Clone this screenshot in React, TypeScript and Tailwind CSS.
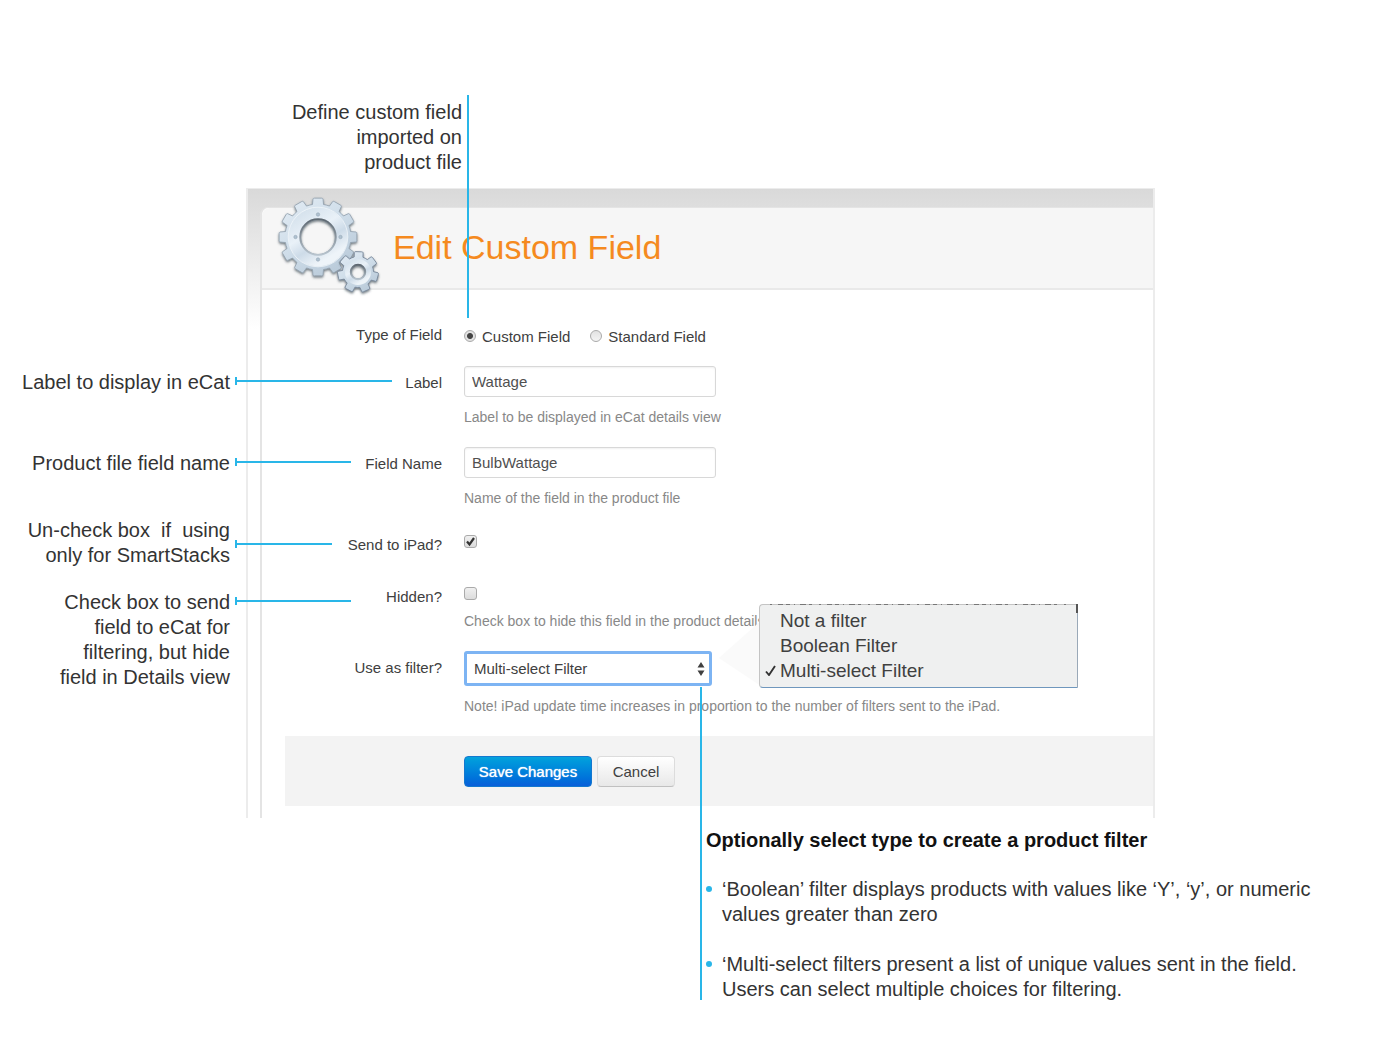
import type { ReactNode } from "react";

const HELP = "text-[14px] leading-5 text-[#888]";
const FIELD =
  "block h-[31px] w-[252px] rounded-[3px] border border-[#d8d8d8] bg-white px-[7px] text-[15px] text-[#505050] shadow-[inset_0_1px_2px_rgba(0,0,0,0.06)] outline-none";

function gearPath(
  cx: number,
  cy: number,
  outer: number,
  root: number,
  hole: number,
  teeth: number,
  offset: number,
) {
  const step = 360 / teeth;
  const at = (r: number, deg: number) => {
    const a = (deg * Math.PI) / 180;
    return `${(cx + r * Math.cos(a)).toFixed(2)} ${(cy + r * Math.sin(a)).toFixed(2)}`;
  };
  let d = "";
  for (let i = 0; i < teeth; i++) {
    const a = offset + i * step;
    d += `${i === 0 ? "M" : "L"}${at(root, a - step * 0.32)}`;
    d += `L${at(outer - 0.6, a - step * 0.25)}`;
    d += `Q${at(outer + 0.3, a - step * 0.22)} ${at(outer, a - step * 0.16)}`;
    d += `L${at(outer, a + step * 0.16)}`;
    d += `Q${at(outer + 0.3, a + step * 0.22)} ${at(outer - 0.6, a + step * 0.25)}`;
    d += `L${at(root, a + step * 0.32)}`;
    d += `A${root} ${root} 0 0 1 ${at(root, a + step * 0.68)}`;
  }
  d += `ZM${cx + hole} ${cy}A${hole} ${hole} 0 1 0 ${cx - hole} ${cy}A${hole} ${hole} 0 1 0 ${cx + hole} ${cy}Z`;
  return d;
}

function Gears() {
  const big = gearPath(43, 41, 39, 33, 17.5, 12, 0);
  const small = gearPath(83, 76, 20.5, 15.5, 7, 7, 15);
  return (
    <svg className="h-[104px] w-[108px] shrink-0" viewBox="0 0 108 104" aria-hidden="true">
      <defs>
        <linearGradient id="steel" x1="0" y1="0" x2="0.7" y2="1">
          <stop offset="0" stopColor="#e4edf5" />
          <stop offset="0.5" stopColor="#d0deea" />
          <stop offset="1" stopColor="#b9cad9" />
        </linearGradient>
        <linearGradient id="face" x1="0" y1="0" x2="0.6" y2="1">
          <stop offset="0" stopColor="#d3e0eb" />
          <stop offset="0.45" stopColor="#e9f1f8" />
          <stop offset="0.7" stopColor="#cddbe8" />
          <stop offset="1" stopColor="#eef4f9" />
        </linearGradient>
        <linearGradient id="rim" x1="0" y1="0" x2="0" y2="1">
          <stop offset="0" stopColor="#5e6871" />
          <stop offset="1" stopColor="#b8c4ce" />
        </linearGradient>
        <filter id="drop" x="-20%" y="-20%" width="140%" height="150%">
          <feDropShadow dx="0" dy="1.5" stdDeviation="1.3" floodColor="#39454f" floodOpacity="0.7" />
        </filter>
      </defs>
      <g filter="url(#drop)">
        <path d={big} fill="url(#steel)" fillRule="evenodd" stroke="#8f9eac" strokeWidth="0.8" />
        <circle cx="43" cy="41" r="24" fill="none" stroke="url(#face)" strokeWidth="11" />
        <circle cx="43" cy="41" r="29.8" fill="none" stroke="#f1f6fa" strokeWidth="0.8" />
        <circle cx="43" cy="41" r="17.8" fill="none" stroke="url(#rim)" strokeWidth="1.8" />
        {[[43, 18.5], [43, 63.5], [20.5, 41], [65.5, 41]].map(([x, y]) => (
          <circle key={`${x}-${y}`} cx={x} cy={y} r="1.7" fill="#b0c2d1" stroke="#93a6b6" strokeWidth="0.6" />
        ))}
      </g>
      <g filter="url(#drop)">
        <path d={small} fill="url(#steel)" fillRule="evenodd" stroke="#77879a" strokeWidth="0.9" />
        <circle cx="83" cy="76" r="10.5" fill="none" stroke="url(#face)" strokeWidth="5" />
        <circle cx="83" cy="76" r="7.2" fill="none" stroke="url(#rim)" strokeWidth="2" />
      </g>
    </svg>
  );
}

function Note({ children, className, line }: { children: ReactNode; className: string; line: string }) {
  return (
    <div className={`relative text-right ${className}`}>
      <p>{children}</p>
      <span className={`absolute left-[235px] flex h-2 items-center border-l-2 border-[#29b6e8] ${line}`}>
        <span className="h-0.5 w-full bg-[#29b6e8]" />
      </span>
    </div>
  );
}

function Row({ label, id, className, children }: { label: string; id: string; className: string; children: ReactNode }) {
  return (
    <div className={`grid grid-cols-[180px_minmax(0,1fr)] gap-[22px] ${className}`}>
      <label htmlFor={id} className="pt-[7px] text-right leading-5">
        {label}
      </label>
      <div>{children}</div>
    </div>
  );
}

const RADIO =
  "size-3 appearance-none rounded-full border border-[#aaa] bg-linear-to-b from-[#e2e2e2] to-[#f4f4f4] checked:bg-[radial-gradient(circle,#444_0_2.5px,#e2e2e2_3.5px)]";
const CHECK =
  "block size-[13px] appearance-none rounded-[3px] border border-[#aaa] bg-linear-to-b from-[#f0f0f0] to-[#dcdcdc]";

export default function App() {
  return (
    <main className="overflow-x-hidden bg-white pt-[100px] pb-12 font-['Liberation_Sans',Arial,sans-serif] text-[20px] leading-[25px] text-[#333]">
      <div className="relative z-10 w-[462px] text-right">
        <p>
          Define custom field
          <br />
          imported on
          <br />
          product file
        </p>
        <span className="absolute -top-[5px] left-[467px] h-[223px] w-0.5 bg-[#29b6e8]" />
      </div>

      <div className="mt-[13px] grid grid-cols-[230px_minmax(0,1fr)] gap-4 pr-[245px]">
        <aside className="relative z-10 pt-[182px]">
          <Note className="" line="top-[7px] w-[157px]">
            Label to display in eCat
          </Note>
          <Note className="mt-14" line="top-[7px] w-[116px]">
            Product file field name
          </Note>
          <Note className="mt-[42px]" line="top-[22px] w-[97px]">
            <span className="whitespace-pre">Un-check box  if  using</span>
            <br />
            only for SmartStacks
          </Note>
          <Note className="mt-[22px]" line="top-[7px] w-[116px]">
            Check box to send
            <br />
            field to eCat for
            <br />
            filtering, but hide
            <br />
            field in Details view
          </Note>
        </aside>

        <section className="border-x-2 border-t border-[#ececec] bg-linear-to-b from-[#d9d9d9] to-white to-[140px] pt-[18px] pl-3">
          <div className="rounded-tl-lg border-t border-l-2 border-[#e4e4e4] bg-white pb-3">
            <header className="flex h-[82px] items-center gap-2.5 rounded-tl-lg border-b-2 border-[#e9e9e9] bg-[#f6f6f6] pl-[13px]">
              <Gears />
              <h1 className="pb-0.5 text-[34px] leading-10 text-[#f58a1f]">Edit Custom Field</h1>
            </header>

            <form className="text-[15px] text-[#404040]" onSubmit={(e) => e.preventDefault()}>
              <Row label="Type of Field" id="type-custom" className="pt-7">
                <div className="flex h-9 items-center gap-5">
                  <label className="flex items-center gap-1.5">
                    <input id="type-custom" type="radio" name="type" defaultChecked className={RADIO} />
                    Custom Field
                  </label>
                  <label className="flex items-center gap-1.5">
                    <input type="radio" name="type" className={RADIO} />
                    Standard Field
                  </label>
                </div>
              </Row>
              <Row label="Label" id="label" className="pt-3">
                <input id="label" type="text" defaultValue="Wattage" className={FIELD} />
                <p className={`mt-2.5 ${HELP}`}>Label to be displayed in eCat details view</p>
              </Row>
              <Row label="Field Name" id="field-name" className="pt-5">
                <input id="field-name" type="text" defaultValue="BulbWattage" className={FIELD} />
                <p className={`mt-2.5 ${HELP}`}>Name of the field in the product file</p>
              </Row>
              <Row label="Send to iPad?" id="send" className="pt-5">
                <div className="relative pt-[7px]">
                  <input id="send" type="checkbox" defaultChecked className={CHECK} />
                  <svg className="pointer-events-none absolute top-[7px] left-0 size-[13px]" viewBox="0 0 13 13" fill="none" aria-hidden="true">
                    <path d="M3 6.5 5.5 9.5 10 3" stroke="#333" strokeWidth="2.2" />
                  </svg>
                </div>
              </Row>
              <Row label="Hidden?" id="hidden" className="pt-[25px]">
                <div className="pt-[7px]">
                  <input id="hidden" type="checkbox" className={CHECK} />
                </div>
                <p className={`mt-[11px] ${HELP}`}>Check box to hide this field in the product details</p>
              </Row>
              <Row label="Use as filter?" id="filter" className="pt-5">
                <div className="relative w-[248px]">
                  <select
                    id="filter"
                    defaultValue="multi"
                    className="block h-[35px] w-full appearance-none rounded-[3px] border-3 border-[#7db4f3] bg-white pl-[7px] text-[15px] text-[#404040] outline-none"
                  >
                    <option value="none">Not a filter</option>
                    <option value="boolean">Boolean Filter</option>
                    <option value="multi">Multi-select Filter</option>
                  </select>
                  <svg className="pointer-events-none absolute top-[11px] right-[7px] h-[14px] w-2" viewBox="0 0 8 14" fill="#404040" aria-hidden="true">
                    <path d="M4 0 7.5 5.5H.5ZM4 14 .5 8.5h7Z" />
                  </svg>
                  <svg className="absolute -top-[47px] left-[255px] h-[84px] w-[45px]" viewBox="0 0 45 84" fill="#fafafa" aria-hidden="true">
                    <path d="M0 54 45 14V84Z" />
                  </svg>
                  <ul className="absolute -top-[47px] left-[295px] h-[84px] w-[319px] rounded-l-[4px] border border-t-[#c4c4c4] border-r-[#9aa9b8] border-b-[#6f97bd] border-l-[#c4c4c4] bg-[#eff0f0] pt-[3px] text-[19px] leading-[25px]">
                    <li className="pl-5">Not a filter</li>
                    <li className="pl-5">Boolean Filter</li>
                    <li className="flex items-center pl-[5px]">
                      <svg className="mr-1 size-[11px]" viewBox="0 0 11 11" fill="none" aria-hidden="true">
                        <path d="M1 6.5 4 10 10 1" stroke="#333" strokeWidth="1.9" />
                      </svg>
                      Multi-select Filter
                    </li>
                  </ul>
                  <svg className="absolute -top-[47px] left-[295px] h-2.5 w-[319px]" viewBox="0 0 319 10" fill="none" aria-hidden="true">
                    <path d="M11 .5H313" stroke="#777" strokeDasharray="2 6 5 3 4 4 1 5 6 3 3 7" />
                    <path d="M318 0V9" stroke="#555" strokeWidth="2" />
                  </svg>
                </div>
                <p className={`mt-2.5 ${HELP}`}>
                  Note! iPad update time increases in proportion to the number of filters sent to the iPad.
                </p>
              </Row>
              <footer className="mt-5 ml-[23px] flex h-[70px] items-center gap-[5px] bg-[#f3f3f3] pl-[179px]">
                <button
                  type="submit"
                  className="h-[31px] w-32 rounded-[4px] border border-[#1478cf] bg-linear-to-b from-[#06a2dc] to-[#0a5fd9] text-[15px] text-white [text-shadow:0_0_1px_white]"
                >
                  Save Changes
                </button>
                <button
                  type="button"
                  className="h-[31px] w-[78px] rounded-[4px] border border-[#dcdcdc] border-b-[#c0c0c0] bg-linear-to-b from-white to-[#e8e8e8] text-[15px] text-[#404040]"
                >
                  Cancel
                </button>
              </footer>
            </form>
          </div>
        </section>
      </div>

      <section className="relative z-10 mt-2.5 ml-[700px] max-w-[630px] pl-1.5">
        <span className="absolute -top-[141px] bottom-0.5 left-0 w-0.5 bg-[#29b6e8]" />
        <h2 className="font-bold text-[#111]">Optionally select type to create a product filter</h2>
        <ul className="mt-6 space-y-[25px]">
          <li className="flex gap-2.5">
            <span className="mt-[9px] size-1.5 shrink-0 rounded-full bg-[#29b6e8]" />
            <span>
              ‘Boolean’ filter displays products with values like ‘Y’, ‘y’, or numeric
              <br />
              values greater than zero
            </span>
          </li>
          <li className="flex gap-2.5">
            <span className="mt-[9px] size-1.5 shrink-0 rounded-full bg-[#29b6e8]" />
            <span>
              ‘Multi-select filters present a list of unique values sent in the field.
              <br />
              Users can select multiple choices for filtering.
            </span>
          </li>
        </ul>
      </section>
    </main>
  );
}
